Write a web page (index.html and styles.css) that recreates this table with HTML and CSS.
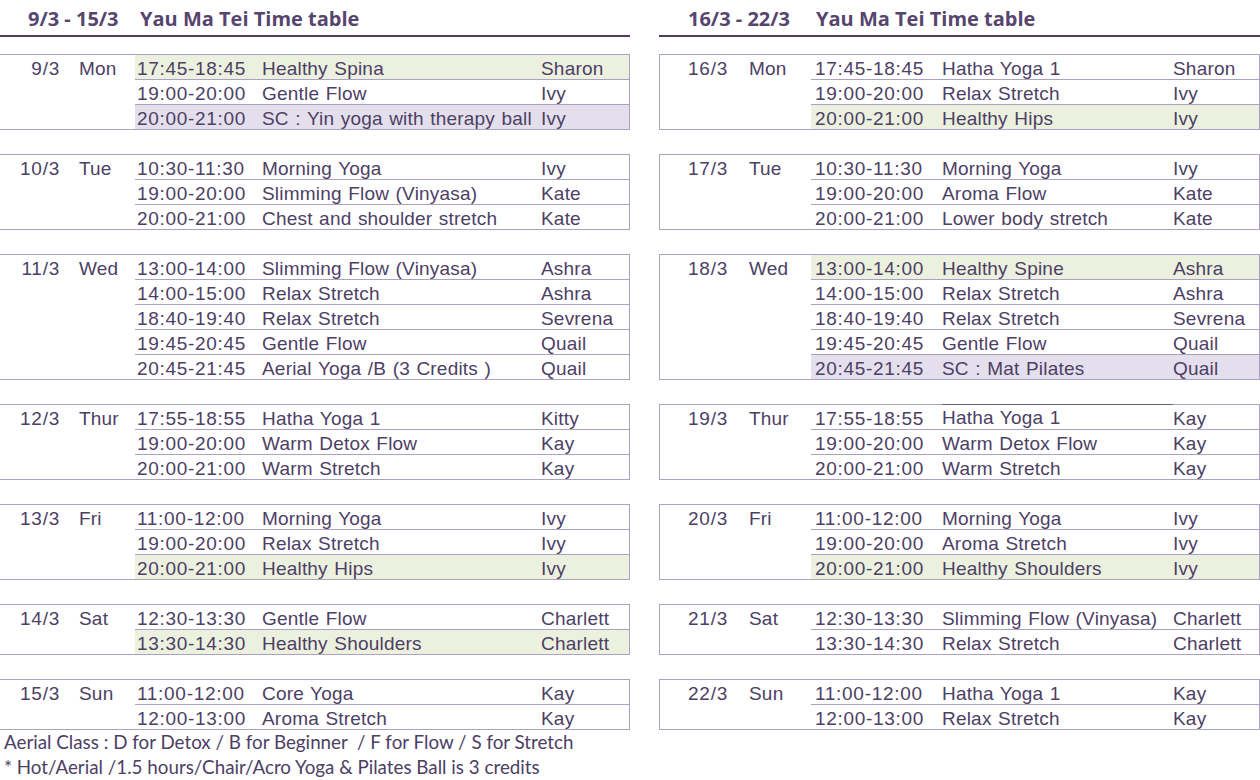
FILE: index.html
```html
<!DOCTYPE html>
<html>
<head>
<meta charset="utf-8">
<link rel="stylesheet" href="styles.css">
</head>
<body>
<div class="page">
  <section class="panel panel-left">
    <header class="head"><span class="range">9/3 - 15/3</span><span class="title">Yau Ma Tei Time table</span></header>

    <div class="day first">
      <div class="dlabel"><span class="date">9/3</span><span class="dow">Mon</span></div>
      <div class="sessions">
        <div class="row green"><span class="t">17:45-18:45</span><span class="c">Healthy Spina</span><span class="i">Sharon</span></div>
        <div class="row"><span class="t">19:00-20:00</span><span class="c">Gentle Flow</span><span class="i">Ivy</span></div>
        <div class="row purple"><span class="t">20:00-21:00</span><span class="c">SC : Yin yoga with therapy ball</span><span class="i">Ivy</span></div>
      </div>
    </div>

    <div class="day">
      <div class="dlabel"><span class="date">10/3</span><span class="dow">Tue</span></div>
      <div class="sessions">
        <div class="row"><span class="t">10:30-11:30</span><span class="c">Morning Yoga</span><span class="i">Ivy</span></div>
        <div class="row"><span class="t">19:00-20:00</span><span class="c">Slimming Flow (Vinyasa)</span><span class="i">Kate</span></div>
        <div class="row"><span class="t">20:00-21:00</span><span class="c">Chest and shoulder stretch</span><span class="i">Kate</span></div>
      </div>
    </div>

    <div class="day">
      <div class="dlabel"><span class="date">11/3</span><span class="dow">Wed</span></div>
      <div class="sessions">
        <div class="row"><span class="t">13:00-14:00</span><span class="c">Slimming Flow (Vinyasa)</span><span class="i">Ashra</span></div>
        <div class="row"><span class="t">14:00-15:00</span><span class="c">Relax Stretch</span><span class="i">Ashra</span></div>
        <div class="row"><span class="t">18:40-19:40</span><span class="c">Relax Stretch</span><span class="i">Sevrena</span></div>
        <div class="row"><span class="t">19:45-20:45</span><span class="c">Gentle Flow</span><span class="i">Quail</span></div>
        <div class="row"><span class="t">20:45-21:45</span><span class="c">Aerial Yoga /B (3 Credits )</span><span class="i">Quail</span></div>
      </div>
    </div>

    <div class="day">
      <div class="dlabel"><span class="date">12/3</span><span class="dow">Thur</span></div>
      <div class="sessions">
        <div class="row"><span class="t">17:55-18:55</span><span class="c">Hatha Yoga 1</span><span class="i">Kitty</span></div>
        <div class="row"><span class="t">19:00-20:00</span><span class="c">Warm Detox Flow</span><span class="i">Kay</span></div>
        <div class="row"><span class="t">20:00-21:00</span><span class="c">Warm Stretch</span><span class="i">Kay</span></div>
      </div>
    </div>

    <div class="day">
      <div class="dlabel"><span class="date">13/3</span><span class="dow">Fri</span></div>
      <div class="sessions">
        <div class="row"><span class="t">11:00-12:00</span><span class="c">Morning Yoga</span><span class="i">Ivy</span></div>
        <div class="row"><span class="t">19:00-20:00</span><span class="c">Relax Stretch</span><span class="i">Ivy</span></div>
        <div class="row green"><span class="t">20:00-21:00</span><span class="c">Healthy Hips</span><span class="i">Ivy</span></div>
      </div>
    </div>

    <div class="day">
      <div class="dlabel"><span class="date">14/3</span><span class="dow">Sat</span></div>
      <div class="sessions">
        <div class="row"><span class="t">12:30-13:30</span><span class="c">Gentle Flow</span><span class="i">Charlett</span></div>
        <div class="row green"><span class="t">13:30-14:30</span><span class="c">Healthy Shoulders</span><span class="i">Charlett</span></div>
      </div>
    </div>

    <div class="day">
      <div class="dlabel"><span class="date">15/3</span><span class="dow">Sun</span></div>
      <div class="sessions">
        <div class="row"><span class="t">11:00-12:00</span><span class="c">Core Yoga</span><span class="i">Kay</span></div>
        <div class="row"><span class="t">12:00-13:00</span><span class="c">Aroma Stretch</span><span class="i">Kay</span></div>
      </div>
    </div>

    <div class="notes">
      <p>Aerial Class : D for Detox / B for Beginner&nbsp; / F for Flow / S for Stretch</p>
      <p>* Hot/Aerial /1.5 hours/Chair/Acro Yoga &amp; Pilates Ball is 3 credits</p>
    </div>
  </section>

  <section class="panel panel-right">
    <header class="head"><span class="range">16/3 - 22/3</span><span class="title">Yau Ma Tei Time table</span></header>

    <div class="day first">
      <div class="dlabel"><span class="date">16/3</span><span class="dow">Mon</span></div>
      <div class="sessions">
        <div class="row"><span class="t">17:45-18:45</span><span class="c">Hatha Yoga 1</span><span class="i">Sharon</span></div>
        <div class="row"><span class="t">19:00-20:00</span><span class="c">Relax Stretch</span><span class="i">Ivy</span></div>
        <div class="row green"><span class="t">20:00-21:00</span><span class="c">Healthy Hips</span><span class="i">Ivy</span></div>
      </div>
    </div>

    <div class="day">
      <div class="dlabel"><span class="date">17/3</span><span class="dow">Tue</span></div>
      <div class="sessions">
        <div class="row"><span class="t">10:30-11:30</span><span class="c">Morning Yoga</span><span class="i">Ivy</span></div>
        <div class="row"><span class="t">19:00-20:00</span><span class="c">Aroma Flow</span><span class="i">Kate</span></div>
        <div class="row"><span class="t">20:00-21:00</span><span class="c">Lower body stretch</span><span class="i">Kate</span></div>
      </div>
    </div>

    <div class="day">
      <div class="dlabel"><span class="date">18/3</span><span class="dow">Wed</span></div>
      <div class="sessions">
        <div class="row green"><span class="t">13:00-14:00</span><span class="c">Healthy Spine</span><span class="i">Ashra</span></div>
        <div class="row"><span class="t">14:00-15:00</span><span class="c">Relax Stretch</span><span class="i">Ashra</span></div>
        <div class="row"><span class="t">18:40-19:40</span><span class="c">Relax Stretch</span><span class="i">Sevrena</span></div>
        <div class="row"><span class="t">19:45-20:45</span><span class="c">Gentle Flow</span><span class="i">Quail</span></div>
        <div class="row purple"><span class="t">20:45-21:45</span><span class="c">SC : Mat Pilates</span><span class="i">Quail</span></div>
      </div>
    </div>

    <div class="day">
      <div class="dlabel"><span class="date">19/3</span><span class="dow">Thur</span></div>
      <div class="sessions">
        <div class="row"><span class="t">17:55-18:55</span><span class="c mark">Hatha Yoga 1</span><span class="i">Kay</span></div>
        <div class="row"><span class="t">19:00-20:00</span><span class="c">Warm Detox Flow</span><span class="i">Kay</span></div>
        <div class="row"><span class="t">20:00-21:00</span><span class="c">Warm Stretch</span><span class="i">Kay</span></div>
      </div>
    </div>

    <div class="day">
      <div class="dlabel"><span class="date">20/3</span><span class="dow">Fri</span></div>
      <div class="sessions">
        <div class="row"><span class="t">11:00-12:00</span><span class="c">Morning Yoga</span><span class="i">Ivy</span></div>
        <div class="row"><span class="t">19:00-20:00</span><span class="c">Aroma Stretch</span><span class="i">Ivy</span></div>
        <div class="row green"><span class="t">20:00-21:00</span><span class="c">Healthy Shoulders</span><span class="i">Ivy</span></div>
      </div>
    </div>

    <div class="day">
      <div class="dlabel"><span class="date">21/3</span><span class="dow">Sat</span></div>
      <div class="sessions">
        <div class="row"><span class="t">12:30-13:30</span><span class="c">Slimming Flow (Vinyasa)</span><span class="i">Charlett</span></div>
        <div class="row"><span class="t">13:30-14:30</span><span class="c">Relax Stretch</span><span class="i">Charlett</span></div>
      </div>
    </div>

    <div class="day">
      <div class="dlabel"><span class="date">22/3</span><span class="dow">Sun</span></div>
      <div class="sessions">
        <div class="row"><span class="t">11:00-12:00</span><span class="c">Hatha Yoga 1</span><span class="i">Kay</span></div>
        <div class="row"><span class="t">12:00-13:00</span><span class="c">Relax Stretch</span><span class="i">Kay</span></div>
      </div>
    </div>
  </section>
</div>
</body>
</html>
```

FILE: styles.css
```css
* { box-sizing: border-box; }
html, body { margin: 0; padding: 0; background: #ffffff; }
body {
  width: 1260px;
  height: 780px;
  overflow: hidden;
  color: #4d4065;
  font-family: "Liberation Sans", Arial, sans-serif;
  font-size: 19px;
  letter-spacing: 0.2px;
}
.page {
  display: flex;
  gap: 29px;
}
.panel-left { width: 630px; flex: none; }
.panel-right { width: 601px; flex: none; }

.head {
  height: 37px;
  border-bottom: 2px solid #4d3e60;
  display: flex;
  align-items: flex-end;
  padding-bottom: 6px;
  font-family: "Open Sans", "Lato", sans-serif;
  font-weight: 700;
  font-size: 20px;
  line-height: 20px;
  letter-spacing: 0;
  color: #56456e;
  white-space: pre;
}
.panel-left .head { padding-left: 28px; }
.panel-left .range { width: 112px; }
.panel-right .head { padding-left: 29px; }
.panel-right .range { width: 128px; }

.day {
  display: flex;
  border: 1px solid #aba1c2;
  margin-top: 24px;
}
.day.first { margin-top: 17px; }
.panel-left .day { border-left: none; }

.dlabel {
  display: flex;
  height: 24px;
  line-height: 27px;
  white-space: nowrap;
}
.date { letter-spacing: 0.75px; text-align: right; }
.panel-left .dlabel { width: 135px; }
.panel-left .date { width: 60px; }
.panel-left .dow { margin-left: 19px; }
.panel-right .dlabel { width: 151px; }
.panel-right .date { width: 68px; }
.panel-right .dow { margin-left: 21px; }

.sessions { flex: 1; }
.row {
  display: grid;
  height: 25px;
  line-height: 27px;
  border-top: 1px solid #aba1c2;
  white-space: nowrap;
}
.row:first-child { border-top: none; height: 24px; }
.panel-left .row { grid-template-columns: 127px 279px 1fr; }
.panel-right .row { grid-template-columns: 131px 231px 1fr; }
.row .t { padding-left: 2px; letter-spacing: 0.7px; }
.panel-right .row .t { padding-left: 4px; }
.row .c { padding-left: 0; word-spacing: 1px; }
.row .i { padding-left: 0; }
.row.green { background: #ebf1de; }
.row.purple { background: #e4dfec; }
.row .c.mark { box-shadow: inset 0 1px 0 #6e6088; margin-top: -1px; }

.notes {
  font-family: "Lato", "Open Sans", sans-serif;
  font-size: 18.8px;
  letter-spacing: 0;
  color: #4d4065;
  padding-left: 4px;
}
.notes p {
  margin: 0;
  height: 25px;
  line-height: 24px;
  white-space: nowrap;
}
```
